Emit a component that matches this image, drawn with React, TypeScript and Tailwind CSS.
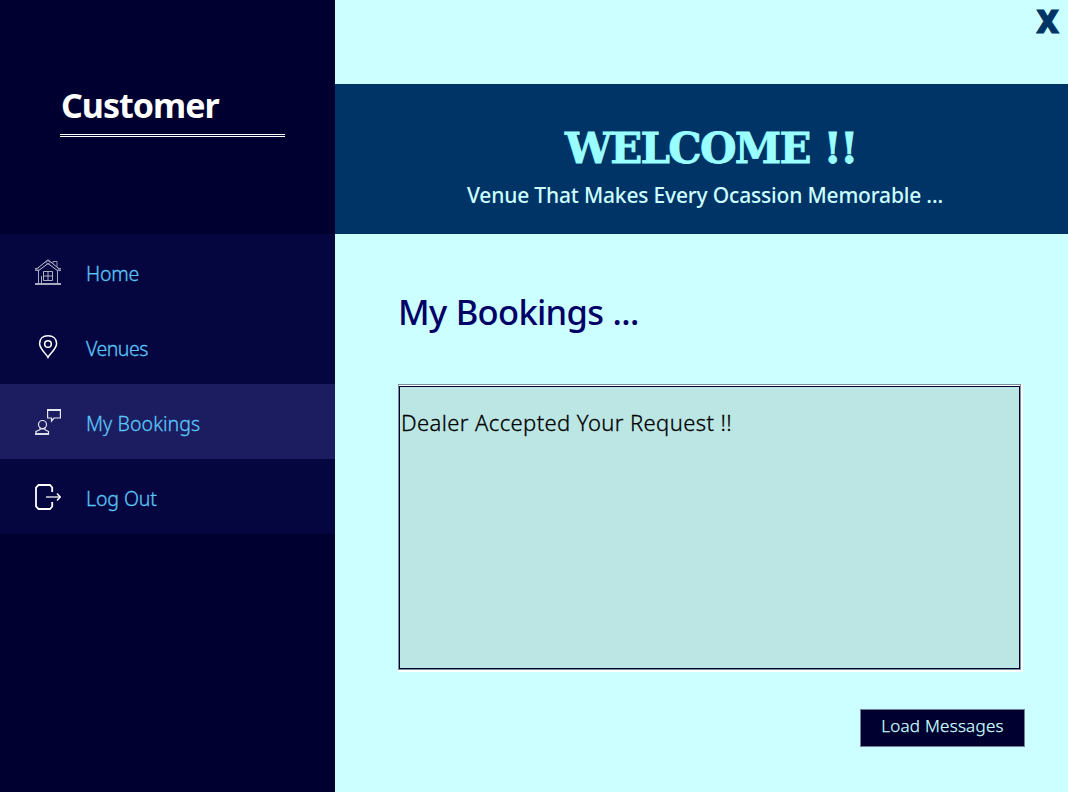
import type { ReactNode } from "react";

function HomeIcon() {
  return (
    <svg width="26" height="26" viewBox="0 0 26 26" fill="none" stroke="#c9c9dc" strokeWidth="1">
      <path d="M0 25h26" stroke="#a9a9bf" strokeWidth="2" />
      <path d="M3.5 12v12M22.5 12v12M6.5 17v7" stroke="#a9a9c0" />
      <path d="M1 10.5L13 .8L25 10.5M3 12L13 4.5L23 12" />
      <path d="M0 9.5h3v2H.5zM23 9.5h3v2h-2.5zM11 3.5l2-2 2 2-2 2zM18 4.5v-2h4v5" stroke="#9a9ab4" />
      <path d="M8.500 12.500h9v9h-9zM13 12v10M8 17h10" stroke="#b0b0c4" />
    </svg>
  );
}

function PinIcon() {
  return (
    <svg width="26" height="26" viewBox="0 0 26 26" fill="none" stroke="#fff" strokeWidth="1.500">
      <path d="M13 23.300C11 19.500 4.600 15 4.600 9.500C4.600 4.500 8 1.700 13 1.700S21.600 4.500 21.600 9.500C21.600 15 15 19.500 13 23.300Z" />
      <circle cx="13" cy="10" r="3.300" />
    </svg>
  );
}

function BookingIcon() {
  return (
    <svg width="26" height="26" viewBox="0 0 26 26" fill="none" stroke="#e6e6f0" strokeWidth="1.200">
      <path d="M12.600 1h12.800v8H19l-2.500 3V9h-3.900z" />
      <path d="M12 1h14" strokeWidth="2" />
      <circle cx="7.500" cy="15.500" r="4" />
      <path d="M5 18.500v2.200L1 22.500V25h12.500v-2.500L10 20.700v-2.200M5 20h5" />
      <path d="M0 25h14" strokeWidth="1.800" />
    </svg>
  );
}

function LogOutIcon() {
  return (
    <svg width="26" height="26" viewBox="0 0 26 26" fill="none" stroke="#fff" strokeWidth="1.800">
      <path d="M17.200 8V3.500L15 1H3.500L1 3.500v19L3.500 25H15l2.200-2.500V18" />
      <path d="M11 13h14" stroke="#d5d5dd" strokeWidth="1.500" />
      <path d="M22 9.500l3.200 3.500-3.200 3.500" strokeWidth="1.400" />
    </svg>
  );
}

function NavItem({ icon, active, children, spacing }: { icon: ReactNode; active?: boolean; children: string; spacing: string }) {
  return (
    <button className={`flex h-[75px] w-full items-center gap-[25px] pl-[35px] text-left ${active ? "bg-[#1c1c60]" : "bg-[#05053f]"}`}>
      <span className="block shrink-0">{icon}</span>
      <span className={`pt-[4px] text-[19.500px] leading-[26px] font-light text-[#5bc5f5] [-webkit-text-stroke:0.3px_currentColor] ${spacing}`}>{children}</span>
    </button>
  );
}

export default function App() {
  return (
    <div className="flex h-[792px] w-[1068px] overflow-hidden bg-[#ccffff] font-['Noto_Sans',sans-serif] whitespace-nowrap">
      <aside className="w-[335px] shrink-0 bg-[#000030]">
        <div className="h-[234px] pt-[81px] pl-[60px]">
          <h1 className="pl-px text-[34px] leading-[48px] font-bold tracking-[-1px] text-white">Customer</h1>
          <div className="mt-[5px] h-[3px] w-[225px] border-y border-white" />
        </div>
        <nav>
          <NavItem icon={<HomeIcon />} spacing="tracking-[-0.2px]">Home</NavItem>
          <NavItem icon={<PinIcon />} spacing="tracking-[-0.5px]">Venues</NavItem>
          <NavItem icon={<BookingIcon />} spacing="tracking-[0.1px]" active>My Bookings</NavItem>
          <NavItem icon={<LogOutIcon />} spacing="tracking-[-0.1px]">Log Out</NavItem>
        </nav>
      </aside>
      <main className="flex flex-1 flex-col">
        <div className="flex h-[84px] justify-end pr-[9px]">
          <button className="h-[42px] font-['Open_Sans',sans-serif] text-[31px] leading-[42px] font-extrabold text-[#003366] [-webkit-text-stroke:1px_#003366]">X</button>
        </div>
        <header className="h-[150px] bg-[#003366] pt-[40px]">
          <div className="pl-[230px] font-['DejaVu_Serif',serif] text-[42px] leading-[50px] font-bold tracking-[-1.8px] [word-spacing:1px] text-[#99ffff] [-webkit-text-stroke:0.8px_#99ffff]">WELCOME !!</div>
          <p className="mt-[6px] pl-[132px] text-[21px] leading-[30px] font-medium tracking-[-0.18px] text-[#ccffff]">Venue That Makes Every Ocassion Memorable ...</p>
        </header>
        <section className="flex flex-col pt-[54px] pl-[63px]">
          <h2 className="text-[34.500px] leading-[48px] font-medium tracking-[-0.7px] [word-spacing:1px] text-[#000066]">My Bookings ...</h2>
          <div className="mt-[48px] w-[625px] border-r-2 border-b-2 border-white">
            <div className="border border-[#78909c] bg-white pt-px">
              <div className="h-[283px] border border-[#000030] bg-[#bce6e4] pt-[19px] pl-px">
                <p className="text-[22px] leading-[32px] font-light tracking-[0.4px] text-black [-webkit-text-stroke:0.3px_black]">Dealer Accepted Your Request !!</p>
              </div>
            </div>
          </div>
          <button className="mt-[37px] ml-[462px] h-[38px] w-[165px] border border-[#708090] bg-[#000030] pb-[4px] text-[17px] leading-[24px] font-light tracking-[0.25px] text-[#ccffff] [-webkit-text-stroke:0.25px_currentColor]">Load Messages</button>
        </section>
      </main>
    </div>
  );
}
